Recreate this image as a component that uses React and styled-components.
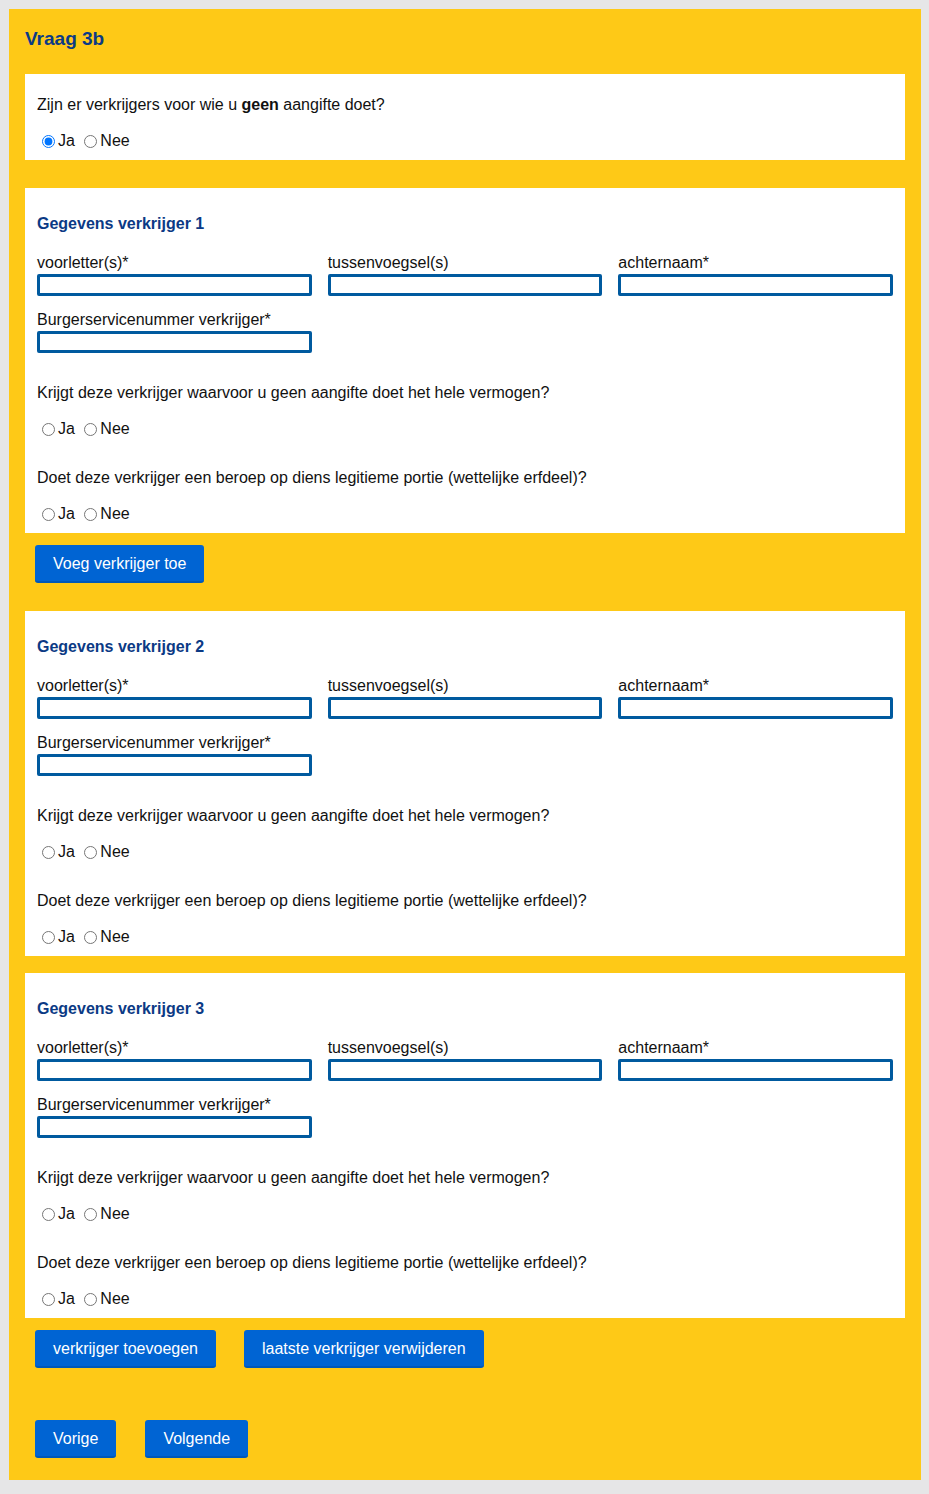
import React from "react";
import styled, { createGlobalStyle } from "styled-components";

const GlobalStyle = createGlobalStyle`
  html, body {
    margin: 0;
    padding: 0;
    background: #e6e6e7;
  }
  body {
    padding: 9px 8px 14px 9px;
    font-family: "Liberation Sans", Arial, sans-serif;
    font-size: 16px;
    line-height: 18px;
    color: #111;
  }
`;

const Page = styled.div`
  background: #fec917;
  padding: 19px 16px 22px 16px;
`;

const Title = styled.h1`
  margin: 0 0 24px 0;
  font-size: 19px;
  line-height: 22px;
  font-weight: bold;
  color: #0b3a85;
`;

const Card = styled.section`
  background: #fff;
  padding: 13px 12px 10px 12px;
  margin-top: ${(p) => p.$gap || 0}px;
`;

const Heading = styled.h2`
  margin: 14px 0 0 0;
  font-size: 16px;
  line-height: 18px;
  font-weight: bold;
  color: #0b3a85;
`;

const FieldGrid = styled.div`
  display: grid;
  grid-template-columns: repeat(3, 1fr);
  column-gap: 16px;
  row-gap: 15px;
  margin-top: 21px;
`;

const Field = styled.label`
  display: flex;
  flex-direction: column;
  gap: 2px;
`;

const Input = styled.input`
  box-sizing: border-box;
  height: 22px;
  width: 100%;
  margin: 0;
  border: 3px solid #005a9f;
  border-radius: 2px;
  padding: 0 4px;
  font: inherit;
  background: #fff;
  outline: none;
`;

const Question = styled.p`
  margin: ${(p) => p.$gap ?? 31}px 0 0 0;
`;

const RadioRow = styled.div`
  margin-top: 18px;
  height: 18px;
  display: flex;
  align-items: center;
  white-space: pre;
`;

const Radio = styled.input`
  margin: 0 3px 0 5px;
  width: 13px;
  height: 13px;
`;

const ButtonRow = styled.div`
  display: flex;
  gap: ${(p) => p.$spacing || 28}px;
  padding-left: 10px;
  margin-top: ${(p) => p.$gap || 12}px;
`;

const Button = styled.button`
  box-sizing: border-box;
  height: 38px;
  padding: 2px 18px 0 18px;
  border: none;
  border-bottom: 2px solid #0058b8;
  border-radius: 3px;
  background: #0064d3;
  color: #fff;
  font-family: "Liberation Sans", Arial, sans-serif;
  font-size: 16px;
  cursor: pointer;
`;

function YesNo({ name, checked }) {
  return (
    <RadioRow>
      <Radio type="radio" name={name} defaultChecked={checked === "ja"} />
      Ja <Radio type="radio" name={name} defaultChecked={checked === "nee"} />
      Nee
    </RadioRow>
  );
}

function Verkrijger({ nr, gap }) {
  return (
    <Card $gap={gap}>
      <Heading>Gegevens verkrijger {nr}</Heading>
      <FieldGrid>
        <Field>
          voorletter(s)*
          <Input type="text" />
        </Field>
        <Field>
          tussenvoegsel(s)
          <Input type="text" />
        </Field>
        <Field>
          achternaam*
          <Input type="text" />
        </Field>
        <Field>
          Burgerservicenummer verkrijger*
          <Input type="text" />
        </Field>
      </FieldGrid>
      <Question>Krijgt deze verkrijger waarvoor u geen aangifte doet het hele vermogen?</Question>
      <YesNo name={`vermogen-${nr}`} />
      <Question>Doet deze verkrijger een beroep op diens legitieme portie (wettelijke erfdeel)?</Question>
      <YesNo name={`portie-${nr}`} />
    </Card>
  );
}

export default function App() {
  return (
    <>
      <GlobalStyle />
      <Page>
        <Title>Vraag 3b</Title>
        <Card>
          <Question $gap={9}>
            Zijn er verkrijgers voor wie u <b>geen</b> aangifte doet?
          </Question>
          <YesNo name="geen-aangifte" checked="ja" />
        </Card>

        <Verkrijger nr={1} gap={28} />
        <ButtonRow>
          <Button>Voeg verkrijger toe</Button>
        </ButtonRow>

        <Verkrijger nr={2} gap={28} />
        <Verkrijger nr={3} gap={17} />
        <ButtonRow>
          <Button>verkrijger toevoegen</Button>
          <Button>laatste verkrijger verwijderen</Button>
        </ButtonRow>

        <ButtonRow $gap={52} $spacing={29}>
          <Button>Vorige</Button>
          <Button>Volgende</Button>
        </ButtonRow>
      </Page>
    </>
  );
}
